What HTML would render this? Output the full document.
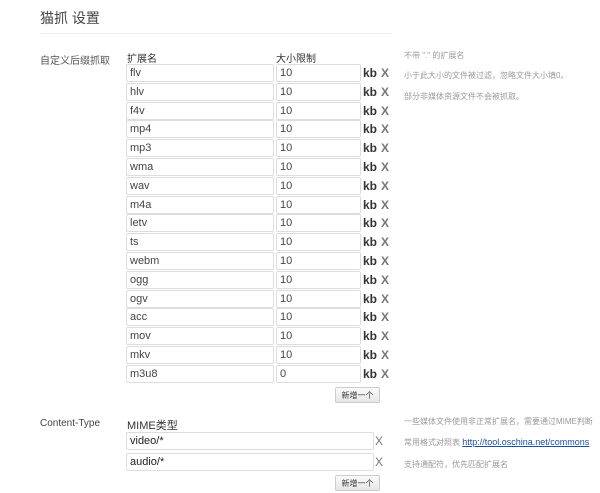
<!DOCTYPE html>
<html><head><meta charset="utf-8"><style>
body{margin:0;width:600px;height:493px;background:#fff;font-family:"Liberation Sans","Noto Sans CJK SC",sans-serif;position:relative;overflow:hidden;color:#333}
.a{position:absolute;white-space:nowrap}
.in{position:absolute;height:16px;border:1px solid #ddd;border-radius:2px;box-sizing:border-box;height:18px;font-size:11px;line-height:16px;padding-left:3px;color:#444}
.kb{position:absolute;font-size:12px;font-weight:bold;color:#333}
.x{position:absolute;font-size:12px;color:#777;font-weight:bold}
.note{position:absolute;font-size:8px;color:#999;white-space:nowrap}
.btn{position:absolute;width:45px;height:16px;border:1px solid #ccc;background:linear-gradient(#fafafa,#e6e6e6);font-size:8px;line-height:16px;text-align:center;color:#333;border-radius:2px;box-sizing:border-box}
</style></head><body>
<div class="a" style="left:40px;top:8px;font-size:14px;color:#444">猫抓 设置</div>
<div class="a" style="left:40px;top:33px;width:352px;height:1px;background:#eee"></div>
<div class="a" style="left:40px;top:52px;font-size:10px;color:#555">自定义后缀抓取</div>
<div class="a" style="left:127px;top:50px;font-size:10px">扩展名</div>
<div class="a" style="left:276px;top:50px;font-size:10px">大小限制</div>
<div class="note" style="left:404px;top:50px">不带 "." 的扩展名</div>
<div class="note" style="left:404px;top:70px">小于此大小的文件被过滤，忽略文件大小填0。</div>
<div class="note" style="left:404px;top:91px">部分非媒体资源文件不会被抓取。</div>
<div id="rows"></div>
<div class="btn" style="left:335px;top:387px">新增一个</div>
<div class="a" style="left:40px;top:418px;font-size:10px;color:#444">Content-Type</div>
<div class="a" style="left:127px;top:417px;font-size:11px">MIME类型</div>
<div class="in" style="left:126px;top:432px;width:248px;font-size:11px;color:#222">video/*</div>
<div class="x" style="left:375px;top:434px;font-weight:normal">X</div>
<div class="in" style="left:126px;top:453px;width:248px;font-size:11px;color:#222">audio/*</div>
<div class="x" style="left:375px;top:455px;font-weight:normal">X</div>
<div class="btn" style="left:335px;top:475px">新增一个</div>
<div class="note" style="left:404px;top:416px">一些媒体文件使用非正常扩展名，需要通过MIME判断</div>
<div class="note" style="left:404px;top:437px">常用格式对照表 <span style="color:#1a4fa0;text-decoration:underline;font-size:9px">http://tool.oschina.net/commons</span></div>
<div class="note" style="left:404px;top:459px">支持通配符，优先匹配扩展名</div>
<script>
var n=["flv","hlv","f4v","mp4","mp3","wma","wav","m4a","letv","ts","webm","ogg","ogv","acc","mov","mkv","m3u8"],h="";
n.forEach(function(s,i){var y=Math.round(64+i*18.8);var v=s=="m3u8"?"0":"10";
h+='<div class="in" style="left:126px;top:'+y+'px;width:148px">'+s+'</div><div class="in" style="left:276px;top:'+y+'px;width:85px">'+v+'</div><div class="kb" style="left:363px;top:'+(y+2)+'px">kb</div><div class="x" style="left:381px;top:'+(y+2)+'px">X</div>';});
document.getElementById("rows").innerHTML=h;
</script>
</body></html>
